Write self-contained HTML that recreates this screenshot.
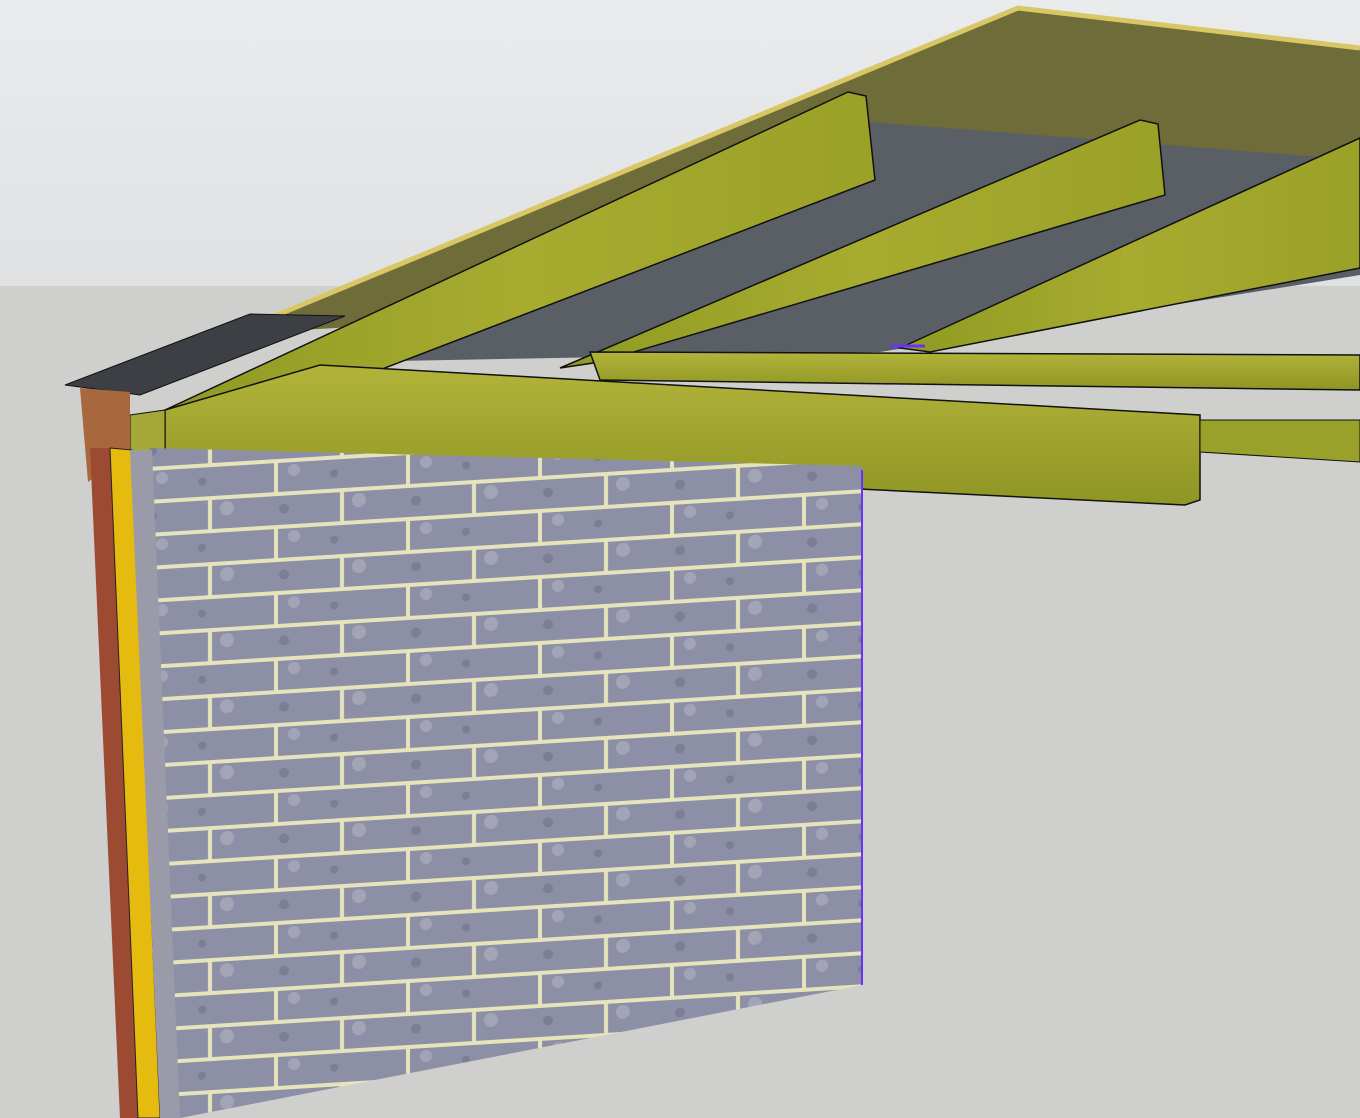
<!DOCTYPE html>
<html><head><meta charset="utf-8"><style>html,body{margin:0;padding:0;width:1360px;height:1118px;overflow:hidden;background:#cfcfcd}</style></head>
<body>
<svg width="1360" height="1118" viewBox="0 0 1360 1118" xmlns="http://www.w3.org/2000/svg">
<defs>
<linearGradient id="sky" x1="0" y1="0" x2="0" y2="1"><stop offset="0" stop-color="#e9ebed"/><stop offset="1" stop-color="#dfe1e3"/></linearGradient>
<linearGradient id="raf" x1="0" y1="0" x2="1" y2="0"><stop offset="0" stop-color="#8f9a22"/><stop offset=".5" stop-color="#a7ac30"/><stop offset="1" stop-color="#9aa127"/></linearGradient>
<linearGradient id="beam" x1="0" y1="0" x2="0" y2="1"><stop offset="0" stop-color="#b2b43a"/><stop offset="1" stop-color="#8f9524"/></linearGradient>
<pattern id="brick" width="132" height="66" patternUnits="userSpaceOnUse" patternTransform="skewY(-3.5) translate(0,14)">
<rect width="132" height="66" fill="#8d8fa6"/>
<circle cx="30" cy="12" r="6" fill="#a3a4b6"/><circle cx="95" cy="46" r="7" fill="#a3a4b6"/><circle cx="70" cy="18" r="4" fill="#7c7e94"/><circle cx="20" cy="50" r="5" fill="#7c7e94"/>
<rect width="132" height="4" y="0" fill="#e6e4bc"/>
<rect width="132" height="4" y="33" fill="#e6e4bc"/>
<rect width="4" height="33" x="10" y="0" fill="#e6e4bc"/>
<rect width="4" height="33" x="76" y="33" fill="#e6e4bc"/>
</pattern>
</defs>
<rect width="1360" height="286" fill="url(#sky)"/>
<rect y="286" width="1360" height="832" fill="#cfcfcd"/>
<polygon points="270,318 1018,8 1360,48 1360,270 300,330" fill="#6e6c38"/>
<polyline points="270,318 1018,8 1360,48" fill="none" stroke="#d9c766" stroke-width="5"/>
<polygon points="340,362 870,122 1360,160 1360,275 880,352" fill="#5a5f66"/>
<polygon points="165,410 848,92 866,96 875,180 210,435" fill="url(#raf)" stroke="#111" stroke-width="1.5"/>
<polygon points="560,368 1140,120 1158,124 1165,195 600,362" fill="url(#raf)" stroke="#111" stroke-width="1.5"/>
<polygon points="900,348 1360,138 1360,268 930,352" fill="url(#raf)" stroke="#111" stroke-width="1.5"/>
<polygon points="590,352 1360,355 1360,390 600,380" fill="url(#beam)" stroke="#111" stroke-width="1.5"/>
<polygon points="165,410 320,365 1200,415 1200,500 1185,505 165,455" fill="url(#beam)" stroke="#111" stroke-width="1.5"/>
<polygon points="1200,420 1360,420 1360,462 1200,452" fill="#9aa12a" stroke="#111" stroke-width="1"/>
<polygon points="130,415 165,410 165,455 130,450" fill="#a4a836" stroke="#111" stroke-width="1"/>
<polygon points="65,385 250,314 345,316 140,395" fill="#3c3f43" stroke="#111"/>
<polygon points="80,388 130,392 130,448 88,482" fill="#a8683e"/>
<polygon points="90,448 110,448 138,1118 120,1118" fill="#9c4a32"/>
<polygon points="110,448 132,450 160,1118 138,1118" fill="#e6bb10" stroke="#222"/>
<polygon points="150,448 862,466 862,985 180,1118 160,1118" fill="url(#brick)"/>
<polygon points="130,450 152,450 180,1118 160,1118" fill="#9a9aa8"/>
<line x1="862" y1="470" x2="862" y2="985" stroke="#6a30ff" stroke-width="2"/>
<line x1="890" y1="346" x2="925" y2="346" stroke="#6a30ff" stroke-width="3"/>
</svg>
</body></html>
